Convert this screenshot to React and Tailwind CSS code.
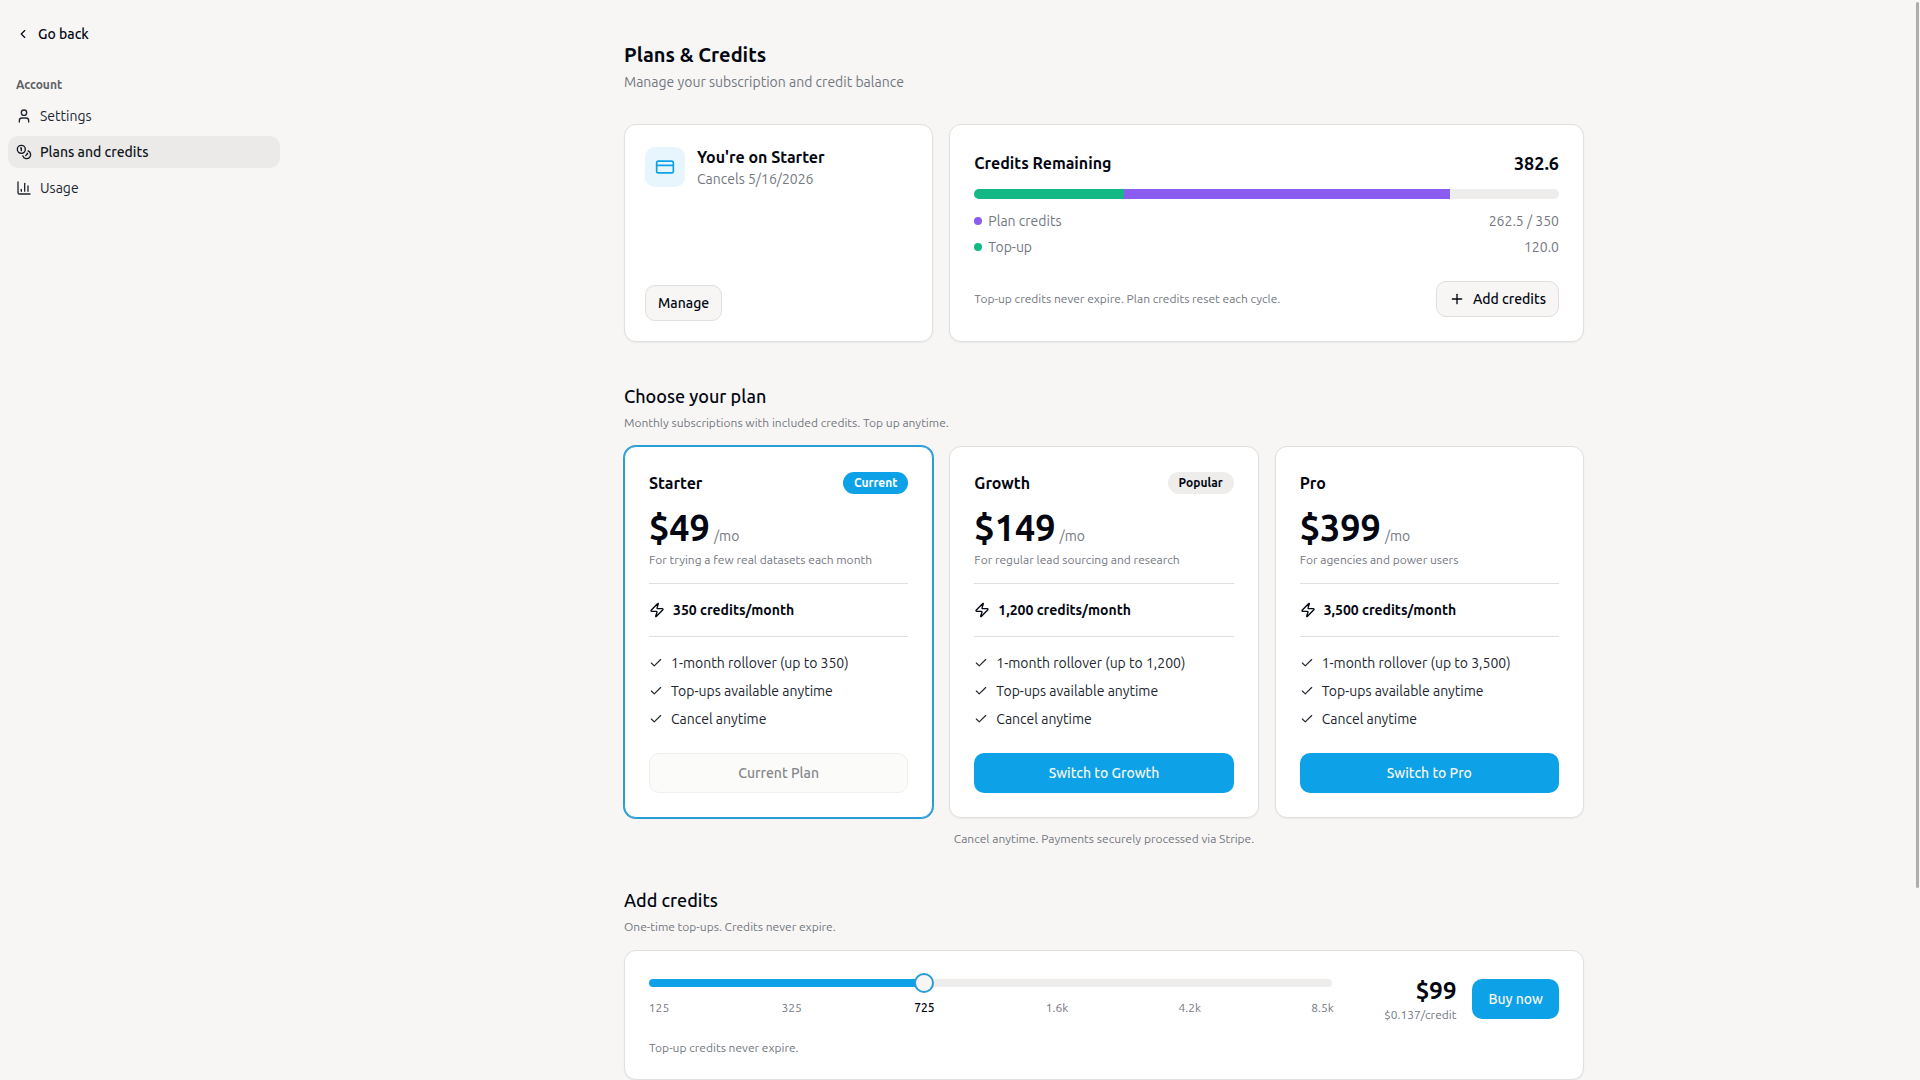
import React, { useState } from 'react';
import { ChartColumn, Check, ChevronLeft, CreditCard, Plus, User, Zap } from 'lucide-react';
import clsx from 'clsx';

const CoinsIcon = ({ className }) => (
  <svg
    className={className}
    viewBox="0 0 24 24"
    fill="none"
    stroke="currentColor"
    strokeWidth="2"
    strokeLinecap="round"
    strokeLinejoin="round"
    aria-hidden="true"
  >
    <circle cx="8" cy="8" r="6" />
    <path d="M18.09 10.37A6 6 0 1 1 10.34 18" />
    <path d="M7 6h1v4" />
    <path d="m16.71 13.88.7.71-2.82 2.82" />
  </svg>
);

const navItems = [
  { label: 'Settings', icon: User },
  { label: 'Plans and credits', icon: CoinsIcon, active: true },
  { label: 'Usage', icon: ChartColumn },
];

const plans = [
  {
    name: 'Starter',
    price: '$49',
    description: 'For trying a few real datasets each month',
    credits: '350',
    badge: 'Current',
    current: true,
  },
  {
    name: 'Growth',
    price: '$149',
    description: 'For regular lead sourcing and research',
    credits: '1,200',
    badge: 'Popular',
  },
  {
    name: 'Pro',
    price: '$399',
    description: 'For agencies and power users',
    credits: '3,500',
  },
];

const topUps = ['125', '325', '725', '1.6k', '4.2k', '8.5k'];

const balance = { plan: 262.5, planTotal: 350, topUp: 120 };

const Sidebar = () => (
  <aside className="w-72 shrink-0 px-2 pt-[18px]">
    <button className="flex h-8 items-center gap-2 px-2 text-sm font-medium">
      <ChevronLeft className="h-3.5 w-3.5" />
      Go back
    </button>
    <nav className="mt-5">
      <h2 className="flex h-[30px] items-center px-2 text-xs font-semibold text-[#5c6068]">Account</h2>
      <ul className="flex flex-col gap-1">
        {navItems.map(({ label, icon: Icon, active }) => (
          <li key={label}>
            <a
              href="#"
              className={clsx(
                'flex h-8 items-center gap-2 rounded-[10px] px-2 text-sm',
                active ? 'bg-[#ebeae9] font-medium text-[#111620]' : 'text-[#22262f]'
              )}
            >
              <Icon className="h-4 w-4" />
              {label}
            </a>
          </li>
        ))}
      </ul>
    </nav>
  </aside>
);

const Card = ({ className, children }) => (
  <section className={clsx('flex flex-col rounded-xl border bg-white shadow-xs', className)}>{children}</section>
);

const OutlineButton = ({ className, children }) => (
  <button
    className={clsx(
      'flex h-9 items-center gap-2 rounded-[10px] border border-[#e0dfde] bg-[#f7f6f5] px-3 text-sm font-medium',
      className
    )}
  >
    {children}
  </button>
);

const SectionHeading = ({ title, subtitle }) => (
  <div>
    <h2 className="text-lg leading-7 font-medium">{title}</h2>
    <p className="mt-1 text-xs leading-[18px] text-[#73777f]">{subtitle}</p>
  </div>
);

const CurrentPlanCard = () => (
  <Card className="justify-between border-[#e0dfde] p-5">
    <div className="flex items-start gap-3">
      <div className="mt-0.5 flex h-10 w-10 items-center justify-center rounded-[10px] bg-[#e7f5fd] text-[#0da2e7]">
        <CreditCard className="h-5 w-5" />
      </div>
      <div>
        <h2 className="text-base font-semibold">You're on Starter</h2>
        <p className="text-sm text-[#73777f]">Cancels 5/16/2026</p>
      </div>
    </div>
    <OutlineButton className="self-start">Manage</OutlineButton>
  </Card>
);

const CreditsCard = () => {
  const total = balance.planTotal + balance.topUp;
  return (
    <Card className="col-span-2 border-[#e0dfde] p-6">
      <div className="flex items-center justify-between">
        <h2 className="text-base font-semibold">Credits Remaining</h2>
        <span className="text-lg leading-7 font-semibold">382.6</span>
      </div>
      <div className="mt-3 flex h-2.5 overflow-hidden rounded-full bg-[#eeedec]">
        <div className="bg-[#14b885]" style={{ width: `${(balance.topUp / total) * 100}%` }} />
        <div className="bg-[#8b5cf0]" style={{ width: `${(balance.plan / total) * 100}%` }} />
      </div>
      <dl className="mt-3 flex flex-col gap-1.5 text-sm text-[#73777f]">
        <div className="flex items-center justify-between">
          <dt className="flex items-center gap-1.5">
            <span className="h-2 w-2 rounded-full bg-[#8b5cf0]" />
            Plan credits
          </dt>
          <dd>262.5 / 350</dd>
        </div>
        <div className="flex items-center justify-between">
          <dt className="flex items-center gap-1.5">
            <span className="h-2 w-2 rounded-full bg-[#14b885]" />
            Top-up
          </dt>
          <dd>120.0</dd>
        </div>
      </dl>
      <div className="mt-6 flex items-center justify-between">
        <p className="text-xs leading-[18px] text-[#73777f]">
          Top-up credits never expire. Plan credits reset each cycle.
        </p>
        <OutlineButton>
          <Plus className="h-4 w-4" />
          Add credits
        </OutlineButton>
      </div>
    </Card>
  );
};

const PlanCard = ({ plan }) => {
  const features = [`1-month rollover (up to ${plan.credits})`, 'Top-ups available anytime', 'Cancel anytime'];

  return (
    <Card className={plan.current ? 'border-[#2a9dd6] p-6 ring-1 ring-[#2a9dd6]' : 'border-[#e0dfde] p-6'}>
      <div className="flex h-6 items-center justify-between">
        <h3 className="text-base font-semibold">{plan.name}</h3>
        {plan.badge && (
          <span
            className={clsx(
              'rounded-full px-[11px] py-0.5 text-xs leading-[18px] font-semibold',
              plan.current ? 'bg-[#0da2e7] text-white' : 'bg-[#eeedec]'
            )}
          >
            {plan.badge}
          </span>
        )}
      </div>
      <p className="mt-3 flex items-baseline gap-1">
        <span className="text-4xl leading-[42px] font-bold">{plan.price}</span>
        <span className="text-sm text-[#73777f]">/mo</span>
      </p>
      <p className="mt-0.5 text-xs leading-[18px] text-[#73777f]">{plan.description}</p>
      <div className="mt-3.5 flex items-center gap-2 border-y border-[#e0dfde] py-4 text-sm font-semibold">
        <Zap className="h-4 w-4" />
        {plan.credits} credits/month
      </div>
      <ul className="mt-4 flex flex-col gap-2 text-sm text-[#22262f]">
        {features.map((feature) => (
          <li key={feature} className="flex items-center gap-2">
            <Check className="h-3.5 w-3.5" />
            {feature}
          </li>
        ))}
      </ul>
      {plan.current ? (
        <button
          disabled
          className="mt-6 h-10 rounded-[10px] border border-[#efefee] bg-[#fbfbfa] text-sm font-medium text-[#85878a]"
        >
          Current Plan
        </button>
      ) : (
        <button className="mt-6 h-10 rounded-[10px] bg-[#0da2e7] text-sm font-medium text-[#f7f6f5]">
          Switch to {plan.name}
        </button>
      )}
    </Card>
  );
};

const TopUpCard = () => {
  const [step, setStep] = useState(2);
  const percent = (step / (topUps.length - 1)) * 100;

  return (
    <Card className="border-[#e0dfde] px-6 pt-6 pb-[22px]">
      <div className="flex items-center gap-6">
        <div className="flex grow flex-col pb-0.5">
          <input
            type="range"
            aria-label="Credit amount"
            min={0}
            max={topUps.length - 1}
            value={step}
            onChange={(e) => setStep(Number(e.target.value))}
            className="block h-2 w-full appearance-none rounded-full [&::-webkit-slider-thumb]:h-5 [&::-webkit-slider-thumb]:w-5 [&::-webkit-slider-thumb]:appearance-none [&::-webkit-slider-thumb]:rounded-full [&::-webkit-slider-thumb]:border-2 [&::-webkit-slider-thumb]:border-solid [&::-webkit-slider-thumb]:border-[#2a9dd6] [&::-webkit-slider-thumb]:bg-[#f7f6f5]"
            style={{ background: `linear-gradient(to right, #0da2e7 ${percent}%, #eeedec ${percent}%)` }}
          />
          <div className="mt-3 flex justify-between text-xs leading-[18px] text-[#73777f]">
            {topUps.map((amount, i) => (
              <button
                key={amount}
                onClick={() => setStep(i)}
                className={clsx('flex w-5 justify-center', i === step && 'font-medium text-[#030712]')}
              >
                {amount}
              </button>
            ))}
          </div>
        </div>
        <div className="flex shrink-0 items-center gap-4">
          <div className="min-w-[100px] text-right">
            <p className="text-2xl font-bold">$99</p>
            <p className="text-xs text-[#73777f]">$0.137/credit</p>
          </div>
          <button className="h-10 rounded-[10px] bg-[#0da2e7] px-4 text-sm font-medium text-[#f7f6f5]">Buy now</button>
        </div>
      </div>
      <p className="mt-4 text-xs leading-[18px] text-[#73777f]">Top-up credits never expire.</p>
    </Card>
  );
};

export default function App() {
  return (
    <div className="relative flex h-screen overflow-hidden bg-[#f7f6f5] font-['Ubuntu','Noto_Sans',sans-serif] text-[#030712]">
      <Sidebar />
      <main className="grow overflow-y-auto [scrollbar-width:none]">
        <div className="mx-auto flex max-w-[960px] flex-col py-10">
          <h1 className="text-xl leading-[30px] font-semibold">Plans & Credits</h1>
          <p className="mt-0.5 text-sm text-[#73777f]">Manage your subscription and credit balance</p>

          <div className="mt-8 grid grid-cols-3 gap-4">
            <CurrentPlanCard />
            <CreditsCard />
          </div>

          <div className="mt-10 flex flex-col gap-3.5">
            <SectionHeading title="Choose your plan" subtitle="Monthly subscriptions with included credits. Top up anytime." />
            <div className="grid grid-cols-3 gap-4">
              {plans.map((plan) => (
                <PlanCard key={plan.name} plan={plan} />
              ))}
            </div>
          </div>
          <p className="mt-3 text-center text-xs leading-[18px] text-[#73777f]">
            Cancel anytime. Payments securely processed via Stripe.
          </p>

          <div className="mt-[38px] flex flex-col gap-3.5">
            <SectionHeading title="Add credits" subtitle="One-time top-ups. Credits never expire." />
            <TopUpCard />
          </div>
        </div>
      </main>
      {/* Overlay scrollbar thumb */}
      <div className="absolute top-0.5 right-px h-[82%] w-[3px] rounded-full bg-[#aeaeac]" />
    </div>
  );
}
